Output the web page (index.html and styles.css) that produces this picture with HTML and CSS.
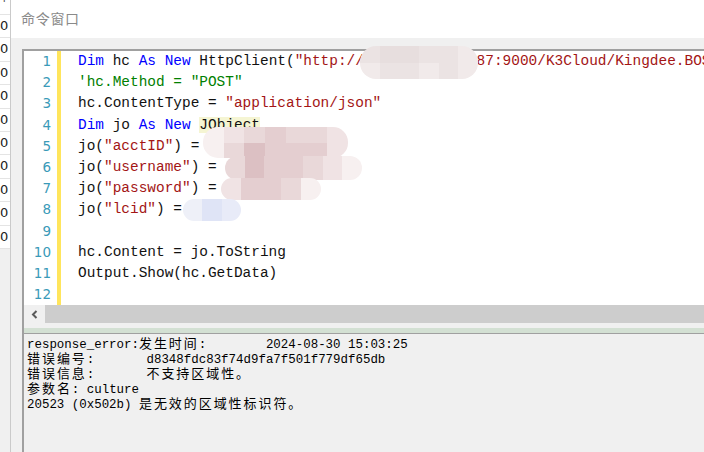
FILE: index.html
```html
<!DOCTYPE html>
<html>
<head>
<meta charset="utf-8">
<link rel="stylesheet" href="styles.css">
</head>
<body>
<div class="app">
  <div class="strip">
    <div class="strip-head"><span class="arrow">↑</span></div>
    <div class="srow">0</div>
    <div class="srow">0</div>
    <div class="srow">0</div>
    <div class="srow">0</div>
    <div class="srow">0</div>
    <div class="srow">0</div>
    <div class="srow">0</div>
    <div class="srow">0</div>
    <div class="srow">0</div>
    <div class="srow">0</div>
  </div>
  <div class="main">
    <div class="titlebar">命令窗口</div>
    <div class="work">
      <div class="editor">
        <div class="code-area">
          <div class="gutter">
            <div>1</div><div>2</div><div>3</div><div>4</div><div>5</div><div>6</div>
            <div>7</div><div>8</div><div>9</div><div>10</div><div>11</div><div>12</div>
          </div>
          <div class="mark"></div>
<div class="code"><div><span class="k">Dim</span> hc <span class="k">As</span> <span class="k">New</span> HttpClient(<span class="s">"http://             87:9000/K3Cloud/Kingdee.BOS.WebApi.ServicesStub.AuthService.ValidateUser.common.kdsvc"</span>)</div><div><span class="c">'hc.Method = "POST"</span></div><div>hc.ContentType = <span class="s">"application/json"</span></div><div><span class="k">Dim</span> jo <span class="k">As</span> <span class="k">New</span> <span class="hl">JObject</span></div><div>jo(<span class="s">"acctID"</span>) = </div><div>jo(<span class="s">"username"</span>) = </div><div>jo(<span class="s">"password"</span>) = </div><div>jo(<span class="s">"lcid"</span>) = </div><div> </div><div>hc.Content = jo.ToString</div><div>Output.Show(hc.GetData)</div><div> </div></div>
        </div>
        <div class="hscroll">
          <div class="hbtn"><svg width="7" height="9" viewBox="0 0 7 9"><polyline points="5.5,1 2,4.5 5.5,8" fill="none" stroke="#5a5a5a" stroke-width="2"/></svg></div>
          <div class="htrack"></div>
        </div>
      </div>
      <div class="gap"></div>
      <div class="splitter"></div>
      <div class="output">
        <div class="oline">response_error:<span class="cj">发生时间</span>:        2024-08-30 15:03:25</div>
        <div class="oline"><span class="cj">错误编号</span>:       d8348fdc83f74d9fa7f501f779df65db</div>
        <div class="oline"><span class="cj">错误信息</span>:       <span class="cj">不支持区域性。</span></div>
        <div class="oline"><span class="cj">参数名</span>: culture</div>
        <div class="oline">20523 (0x502b) <span class="cj">是无效的区域性标识符。</span></div>
      </div>
    </div>
  </div>
</div>

<div class="blob blob-url">
  <div class="brow"><i class="m2"></i><i class="m3"></i><i class="m3"></i><i class="m2"></i><i class="m2"></i><i class="m1"></i></div>
  <div class="brow"><i class="m1"></i><i class="m2"></i><i class="m2"></i><i class="m1"></i><i class="m2"></i><i class="m1"></i></div>
</div>

<div class="blob blob-r5">
  <div class="brow"><i class="p0"></i><i class="p1"></i><i class="p2"></i><i class="p3"></i><i class="p2"></i><i class="p2"></i><i class="p1"></i></div>
  <div class="brow"><i class="p0"></i><i class="p2"></i><i class="p4"></i><i class="p3"></i><i class="p3"></i><i class="p3"></i><i class="p1"></i></div>
</div>
<div class="blob blob-r6">
  <div class="brow"><i class="p2"></i><i class="p4"></i><i class="p3"></i><i class="p3"></i><i class="p2"></i><i class="p1"></i><i class="p0"></i></div>
</div>
<div class="blob blob-r7">
  <div class="brow"><i class="p1"></i><i class="p3"></i><i class="p3"></i><i class="p2"></i><i class="p0"></i></div>
</div>

<div class="blob blob-blue">
  <div class="brow"><i class="b0"></i><i class="b2"></i><i class="b1"></i></div>
</div>
</body>
</html>
```

FILE: styles.css
```css
* { box-sizing: border-box; margin: 0; padding: 0; }
html, body { width: 704px; height: 452px; overflow: hidden; }
body { background: #f0f0f0; font-family: "Liberation Sans", sans-serif; position: relative; }

.app { display: flex; height: 452px; }

.strip {
  width: 11px; flex: none; border-right: 1px solid #cacaca;
  background: #f0f0f0; overflow: hidden; display: flex; flex-direction: column;
}
.strip-head { height: 15px; flex: none; background: #fff; border-bottom: 1px solid #e4e4e4; position: relative; overflow: hidden; }
.arrow { position: absolute; left: -1px; top: -8px; font: 12px/12px "DejaVu Sans", sans-serif; color: #555; }
.srow {
  height: 23.4px; flex: none; background: #fff; border-bottom: 1px solid #e4e4e4;
  text-align: right; padding-right: 4px; font: 13px/22.4px "DejaVu Sans", sans-serif; color: #222;
  white-space: nowrap; overflow: hidden;
}

.main { flex: 1; display: flex; flex-direction: column; min-width: 0; }
.titlebar {
  height: 38px; flex: none; background: #fff; padding-left: 10px;
  font: 14px/36px "Noto Sans CJK SC", sans-serif; letter-spacing: 0.7px; color: #8a8a8a;
}

.work {
  margin: 11px 0 0 11px; flex: 1; display: flex; flex-direction: column;
  border-left: 2px solid #a0a0a0; min-height: 0;
}
.editor { border-top: 2px solid #a0a0a0; flex: none; }
.code-area { height: 254px; background: #fff; display: flex; overflow: hidden; }
.gutter {
  width: 29px; flex: none; padding-right: 2px; text-align: right;
  font: 13.5px/21.2px "DejaVu Sans", sans-serif; color: #3a9ab8;
}
.mark { width: 4px; flex: none; margin-left: 4px; background: #ffe55c; }
.code {
  padding-left: 17px; font: 14.45px/21.2px "Liberation Mono", monospace;
  white-space: pre; color: #111;
}
.code div { height: 21.2px; }
.k { color: #0000ff; }
.s { color: #a31515; }
.c { color: #008000; }
.hl { background: #f5f5d3; }

.hscroll { height: 18px; display: flex; }
.hbtn { width: 21px; flex: none; background: #f0f0f0; display: flex; align-items: center; justify-content: center; }
.htrack { flex: 1; background: #cdcdcd; }

.gap { height: 5px; flex: none; background: #f0f0f0; }
.splitter { height: 5px; flex: none; background: #d3e0d3; }
.output { flex: 1; border-top: 1px solid #a0a0a0; background: #f0f0f0; padding: 1px 0 0 3px; }
.oline {
  height: 15px; white-space: pre; overflow: visible;
  font: 12.45px/15px "Liberation Mono", monospace; color: #000;
}
.cj { font-family: "Noto Sans CJK SC", sans-serif; font-size: 13px; line-height: 15px; letter-spacing: 1.94px; }

.blob { position: absolute; overflow: hidden; display: flex; flex-direction: column; filter: blur(0.6px); }
.brow { display: flex; flex: 1; }
.brow i { flex: 1; display: block; }

.blob-url { left: 360px; top: 46px; width: 118px; height: 33px; border-radius: 16px; }
.m1 { background: #f1eaea; }
.m2 { background: #ebe3e3; }
.m3 { background: #e7dede; }

.p0 { background: #f7f0f0; }
.p1 { background: #f0e3e4; }
.p2 { background: #e9d8d9; }
.p3 { background: #e4ced0; }
.p4 { background: #dcc0c3; }
.blob-r5 { left: 203px; top: 127px; width: 145px; height: 31px; border-radius: 15px; }
.blob-r6 { left: 225px; top: 156px; width: 137px; height: 24px; border-radius: 12px; }
.blob-r7 { left: 221px; top: 178px; width: 100px; height: 22px; border-radius: 11px; }

.blob-blue { left: 183px; top: 199px; width: 58px; height: 22px; border-radius: 11px; }
.b0 { background: #eef0f8; }
.b1 { background: #e8ebf8; }
.b2 { background: #dfe4f6; }
```
